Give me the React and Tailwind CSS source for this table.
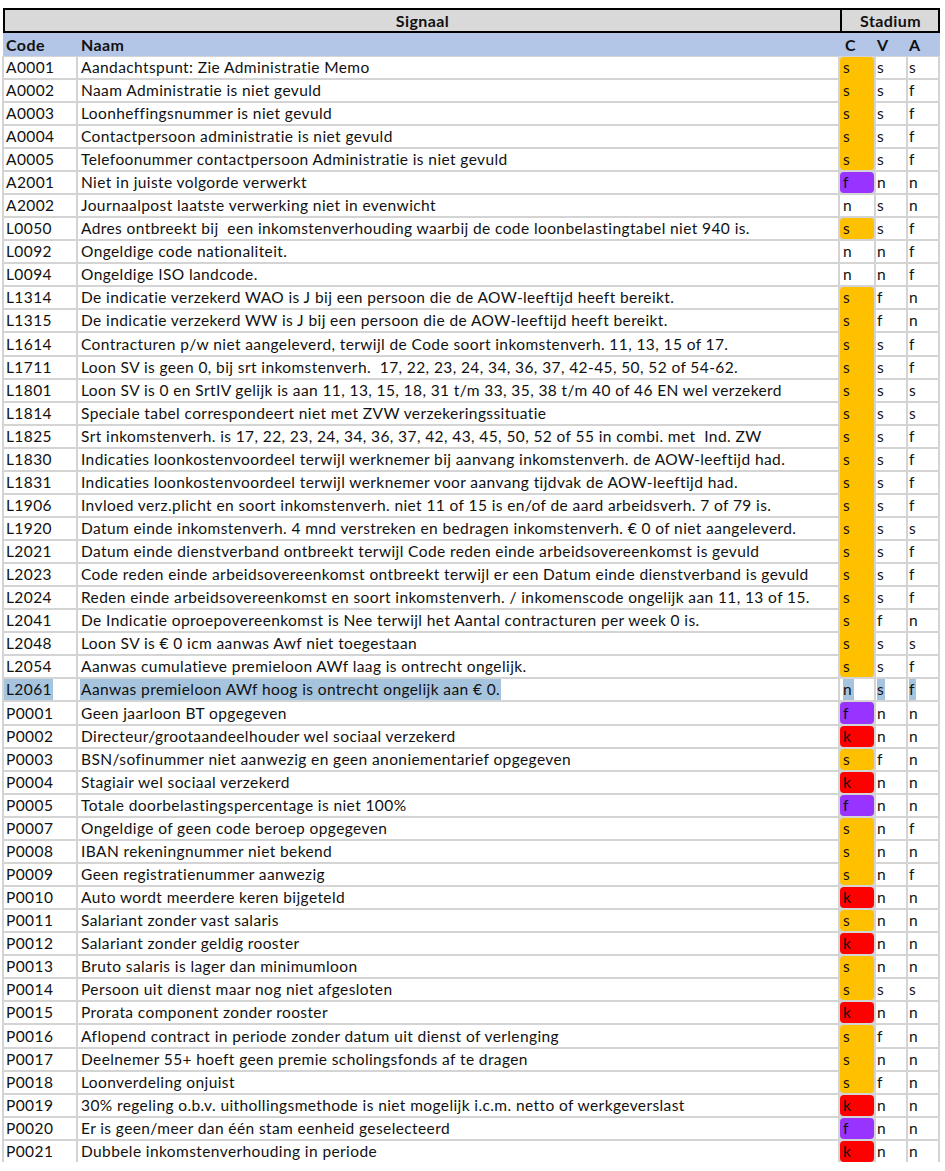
import React from "react";

const O = "bg-[#ffc000]";
const P = "bg-[#9933ff]";
const R = "bg-[#ff0000]";
const W = "bg-white";

const rows = [
  ["A0001", "Aandachtspunt: Zie Administratie Memo", "s", O, "s", "s"],
  ["A0002", "Naam Administratie is niet gevuld", "s", O, "s", "f"],
  ["A0003", "Loonheffingsnummer is niet gevuld", "s", O, "s", "f"],
  ["A0004", "Contactpersoon administratie is niet gevuld", "s", O, "s", "f"],
  ["A0005", "Telefoonummer contactpersoon Administratie is niet gevuld", "s", O, "s", "f"],
  ["A2001", "Niet in juiste volgorde verwerkt", "f", P, "n", "n"],
  ["A2002", "Journaalpost laatste verwerking niet in evenwicht", "n", W, "s", "n"],
  ["L0050", "Adres ontbreekt bij  een inkomstenverhouding waarbij de code loonbelastingtabel niet 940 is.", "s", O, "s", "f"],
  ["L0092", "Ongeldige code nationaliteit.", "n", W, "n", "f"],
  ["L0094", "Ongeldige ISO landcode.", "n", W, "n", "f"],
  ["L1314", "De indicatie verzekerd WAO is J bij een persoon die de AOW-leeftijd heeft bereikt.", "s", O, "f", "n"],
  ["L1315", "De indicatie verzekerd WW is J bij een persoon die de AOW-leeftijd heeft bereikt.", "s", O, "f", "n"],
  ["L1614", "Contracturen p/w niet aangeleverd, terwijl de Code soort inkomstenverh. 11, 13, 15 of 17.", "s", O, "s", "f"],
  ["L1711", "Loon SV is geen 0, bij srt inkomstenverh.  17, 22, 23, 24, 34, 36, 37, 42-45, 50, 52 of 54-62.", "s", O, "s", "f"],
  ["L1801", "Loon SV is 0 en SrtIV gelijk is aan 11, 13, 15, 18, 31 t/m 33, 35, 38 t/m 40 of 46 EN wel verzekerd", "s", O, "s", "s"],
  ["L1814", "Speciale tabel correspondeert niet met ZVW verzekeringssituatie", "s", O, "s", "s"],
  ["L1825", "Srt inkomstenverh. is 17, 22, 23, 24, 34, 36, 37, 42, 43, 45, 50, 52 of 55 in combi. met  Ind. ZW", "s", O, "s", "f"],
  ["L1830", "Indicaties loonkostenvoordeel terwijl werknemer bij aanvang inkomstenverh. de AOW-leeftijd had.", "s", O, "s", "f"],
  ["L1831", "Indicaties loonkostenvoordeel terwijl werknemer voor aanvang tijdvak de AOW-leeftijd had.", "s", O, "s", "f"],
  ["L1906", "Invloed verz.plicht en soort inkomstenverh. niet 11 of 15 is en/of de aard arbeidsverh. 7 of 79 is.", "s", O, "s", "f"],
  ["L1920", "Datum einde inkomstenverh. 4 mnd verstreken en bedragen inkomstenverh. € 0 of niet aangeleverd.", "s", O, "s", "s"],
  ["L2021", "Datum einde dienstverband ontbreekt terwijl Code reden einde arbeidsovereenkomst is gevuld", "s", O, "s", "f"],
  ["L2023", "Code reden einde arbeidsovereenkomst ontbreekt terwijl er een Datum einde dienstverband is gevuld", "s", O, "s", "f"],
  ["L2024", "Reden einde arbeidsovereenkomst en soort inkomstenverh. / inkomenscode ongelijk aan 11, 13 of 15.", "s", O, "s", "f"],
  ["L2041", "De Indicatie oproepovereenkomst is Nee terwijl het Aantal contracturen per week 0 is.", "s", O, "f", "n"],
  ["L2048", "Loon SV is € 0 icm aanwas Awf niet toegestaan", "s", O, "s", "s"],
  ["L2054", "Aanwas cumulatieve premieloon AWf laag is ontrecht ongelijk.", "s", O, "s", "f"],
  ["L2061", "Aanwas premieloon AWf hoog is ontrecht ongelijk aan € 0.", "n", W, "s", "f", true],
  ["P0001", "Geen jaarloon BT opgegeven", "f", P, "n", "n"],
  ["P0002", "Directeur/grootaandeelhouder wel sociaal verzekerd", "k", R, "n", "n"],
  ["P0003", "BSN/sofinummer niet aanwezig en geen anoniementarief opgegeven", "s", O, "f", "n"],
  ["P0004", "Stagiair wel sociaal verzekerd", "k", R, "n", "n"],
  ["P0005", "Totale doorbelastingspercentage is niet 100%", "f", P, "n", "n"],
  ["P0007", "Ongeldige of geen code beroep opgegeven", "s", O, "n", "f"],
  ["P0008", "IBAN rekeningnummer niet bekend", "s", O, "n", "n"],
  ["P0009", "Geen registratienummer aanwezig", "s", O, "n", "f"],
  ["P0010", "Auto wordt meerdere keren bijgeteld", "k", R, "n", "n"],
  ["P0011", "Salariant zonder vast salaris", "s", O, "n", "n"],
  ["P0012", "Salariant zonder geldig rooster", "k", R, "n", "n"],
  ["P0013", "Bruto salaris is lager dan minimumloon", "s", O, "n", "n"],
  ["P0014", "Persoon uit dienst maar nog niet afgesloten", "s", O, "s", "s"],
  ["P0015", "Prorata component zonder rooster", "k", R, "n", "n"],
  ["P0016", "Aflopend contract in periode zonder datum uit dienst of verlenging", "s", O, "f", "n"],
  ["P0017", "Deelnemer 55+ hoeft geen premie scholingsfonds af te dragen", "s", O, "n", "n"],
  ["P0018", "Loonverdeling onjuist", "s", O, "f", "n"],
  ["P0019", "30% regeling o.b.v. uithollingsmethode is niet mogelijk i.c.m. netto of werkgeverslast", "k", R, "n", "n"],
  ["P0020", "Er is geen/meer dan één stam eenheid geselecteerd", "f", P, "n", "n"],
  ["P0021", "Dubbele inkomstenverhouding in periode", "k", R, "n", "n"],
];

const SEL = "bg-[#a7c4de]";

function Row({ r, prev, next, tall }) {
  const [code, naam, c, col, v, a, sel] = r;
  const colored = col !== W;
  const samePrev = prev && prev[3] === col && colored;
  const sameNext = next && next[3] === col && colored;
  let cCls = `${col} w-[34px] shrink-0 pl-[3px] relative`;
  if (colored) {
    cCls += sameNext ? (tall ? " h-[24px]" : " h-[23px]") : " h-full";
    if (!samePrev) cCls += " rounded-t-[4px]";
    if (!sameNext) cCls += " rounded-b-[4px]";
  } else {
    cCls += " h-full";
  }
  return (
    <div className={`flex gap-[2px] ${tall ? "h-[22px] leading-[22px]" : "h-[21px] leading-[21px]"} mb-[2px]`}>
      <div className="w-[72px] shrink-0 bg-white h-full">
        <span className={`inline-block h-full pl-[2px] ${sel ? SEL + " pr-[1px]" : ""}`}>{code}</span>
      </div>
      <div className="w-[760px] shrink-0 bg-white h-full pl-[2px] whitespace-pre overflow-hidden">
        <span className={`inline-block h-full pl-[1px] pr-[1px] ${sel ? SEL : ""}`}>{naam}</span>
      </div>
      <div className={cCls}>
        <span className={`inline-block h-[21px] ${sel ? SEL + " pr-[2px]" : ""}`}>{c}</span>
      </div>
      <div className="w-[30px] shrink-0 bg-white h-full pl-[1px]">
        <span className={`inline-block h-full ${sel ? SEL + " pr-[1px]" : ""}`}>{v}</span>
      </div>
      <div className="w-[30px] shrink-0 bg-white h-full pl-[1px]">
        <span className={`inline-block h-full ${sel ? SEL + " pr-[1px]" : ""}`}>{a}</span>
      </div>
    </div>
  );
}

export default function App() {
  return (
    <div
      className="w-[945px] h-[1171px] bg-white pt-[8px] text-[15.5px] tracking-[0.4px] text-[#111111]"
      style={{ fontFamily: "Lato, 'Liberation Sans', sans-serif" }}
    >
      <div className="ml-[2px] w-[938px]">
        {/* header row 1 */}
        <div className="flex h-[25px] border-[2px] border-black bg-[#d9d9d9] ml-[1px] w-[937px] font-bold text-[16px] leading-[21px]">
          <div className="w-[835px] shrink-0 text-center">Signaal</div>
          <div className="w-[2px] bg-black shrink-0" />
          <div className="flex-1 text-center pl-[1px]">Stadium</div>
        </div>
        {/* header row 2 */}
        <div className="flex h-[23px] bg-[#b4c6e7] font-bold text-[16px] leading-[23px] ml-[1px] w-[937px]">
          <div className="w-[77px] shrink-0 pl-[3px]">Code</div>
          <div className="w-[762px] shrink-0 pl-[1px]">Naam</div>
          <div className="w-[34px] shrink-0 pl-[3px]">C</div>
          <div className="w-[32px] shrink-0 pl-[1px]">V</div>
          <div className="flex-1 pl-[1px]">A</div>
        </div>
        {/* data */}
        <div className="bg-[#d4d4d4] px-[2px] pt-[1px]">
          {rows.map((r, i) => (
            <Row
              key={r[0]}
              r={r}
              prev={rows[i - 1]}
              next={rows[i + 1]}
              tall={i === 12 || i === 28 || i === 42}
            />
          ))}
        </div>
      </div>
    </div>
  );
}
